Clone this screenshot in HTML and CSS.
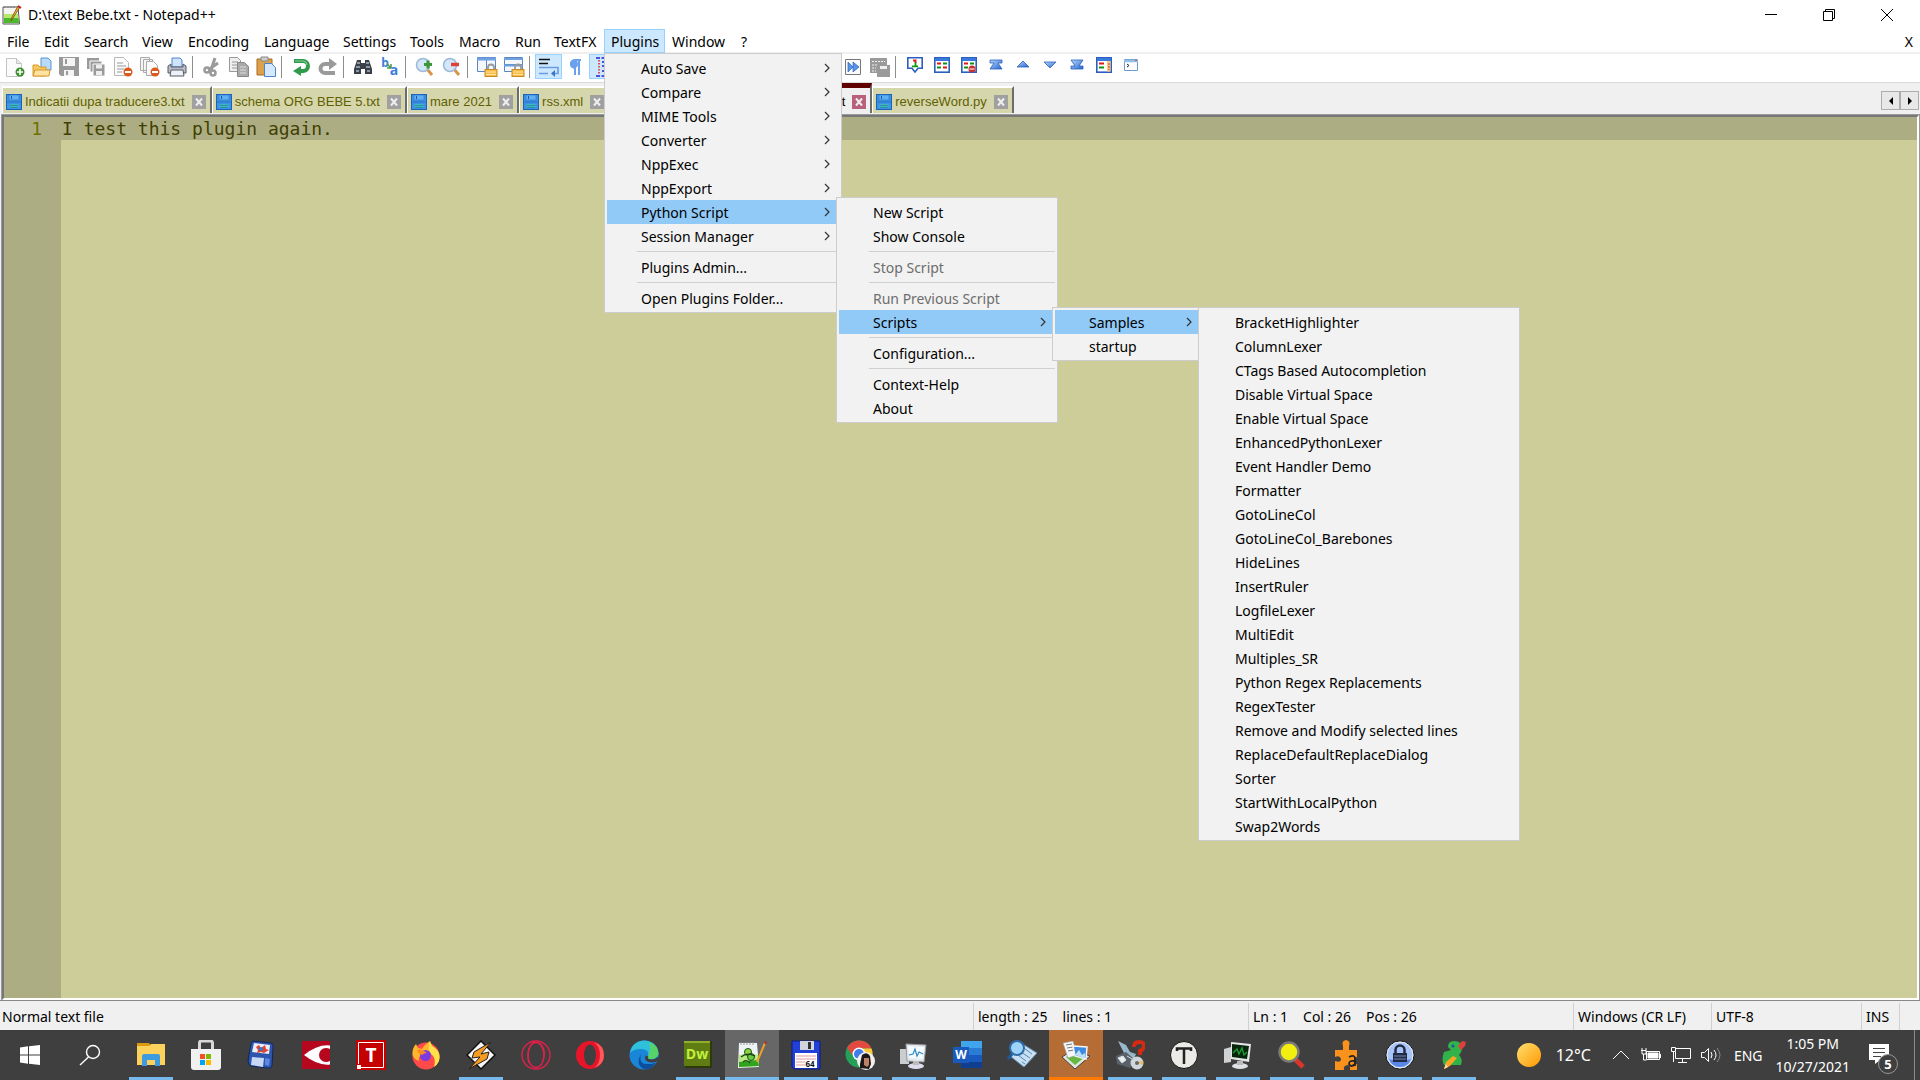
FILE: index.html
```html
<!DOCTYPE html>
<html lang="en">
<head>
    <meta charset="UTF-8">
    <meta name="viewport" content="width=device-width, initial-scale=1.0">
    <title>D:\text Bebe.txt - Notepad++</title>
    <link rel="stylesheet" href="styles.css">
</head>
<body>
    <!-- shared symbols -->
    <svg class="defs" aria-hidden="true">
        <symbol id="floppy" viewBox="0 0 16 16">
            <rect x=".5" y=".5" width="15" height="15" fill="#3c92e4" stroke="#1a63b8"/>
            <path d="M3 1h10v5H3z" fill="#5fb0f2" stroke="#2a74c6" stroke-width=".6"/>
            <path d="M5 2h1v3H5z" fill="#1a5ba8"/>
            <path d="M1 8h14" stroke="#2a74c6"/>
            <path d="M3.500 10h9v4h-9z" fill="#3fb5c0"/>
            <path d="M4 11.500h8M4 13.500h8" stroke="#1f7f9c" stroke-width=".7"/>
        </symbol>
        <symbol id="cross" viewBox="0 0 14 14">
            <path d="M4 3.500l6 7M10 3.500l-6 7" stroke="#eee" stroke-width="2"/>
        </symbol>
        <symbol id="arrow" viewBox="0 0 6 10">
            <path d="M1 1l4 4-4 4" fill="none" stroke="#333" stroke-width="1.200"/>
        </symbol>
        <symbol id="lock" viewBox="0 0 14 14">
            <path d="M4 7V4.500a3 3 0 0 1 6 0V7" fill="none" stroke="#999" stroke-width="1.800"/>
            <rect x="1" y="6.500" width="12" height="7" fill="#f6bd4a" stroke="#c98a20"/>
            <path d="M2 9h10M2 11.500h10" stroke="#fde09a"/>
        </symbol>
        <symbol id="grid-win" viewBox="0 0 16 16">
            <rect x=".8" y=".8" width="14.400" height="14.400" fill="#fff" stroke="#2a5fc0" stroke-width="1.600"/>
            <path d="M1 2.500h14" stroke="#3a78dc" stroke-width="3"/>
        </symbol>
        <linearGradient id="blueFade" x1="0" y1="0" x2="1" y2="1">
            <stop offset="0" stop-color="#b8d8fa"/><stop offset="1" stop-color="#2464d0"/>
        </linearGradient>
    </svg>

    <div class="window">
        <header class="titlebar">
            <svg class="app-icon" viewBox="0 0 20 20">
                <path d="M1 2h15l1.500 17H1z" fill="#f4f4f0" stroke="#555"/>
                <path d="M2 9h14l1 9H2z" fill="#b4ea6a"/><path d="M2 13h14.500l.5 5H2z" fill="#4cb82c"/>
                <path d="M3 1v2M6 1v2M9 1v2M12 1v2" stroke="#777"/>
                <path d="M18 2l-7 11-2 3 1-4 6-11z" fill="#f3ac2b" stroke="#7b4b12" stroke-width=".8"/>
                <path d="M16 1l3 2" stroke="#b22" stroke-width="2"/>
            </svg>
            <span class="title">D:\text Bebe.txt - Notepad++</span>
            <div class="win-buttons">
                <button aria-label="Minimize"><svg viewBox="0 0 12 12"><path d="M0 5.500h12"/></svg></button>
                <button aria-label="Restore"><svg viewBox="0 0 12 12"><path d="M.5 2.500h9v9h-9zM2.500 2.500v-2h9v9h-2"/></svg></button>
                <button aria-label="Close"><svg viewBox="0 0 12 12"><path d="M0 0l12 12M12 0L0 12"/></svg></button>
            </div>
        </header>

        <nav class="menubar">
            <button>File</button>
            <button>Edit</button>
            <button>Search</button>
            <button>View</button>
            <button>Encoding</button>
            <button>Language</button>
            <button>Settings</button>
            <button>Tools</button>
            <button>Macro</button>
            <button>Run</button>
            <button>TextFX</button>
            <div class="menu-holder">
                <button class="open">Plugins</button>
                <ul class="menu plugins-menu">
                    <li><button>Auto Save</button><svg class="arrow"><use href="#arrow"/></svg></li>
                    <li><button>Compare</button><svg class="arrow"><use href="#arrow"/></svg></li>
                    <li><button>MIME Tools</button><svg class="arrow"><use href="#arrow"/></svg></li>
                    <li><button>Converter</button><svg class="arrow"><use href="#arrow"/></svg></li>
                    <li><button>NppExec</button><svg class="arrow"><use href="#arrow"/></svg></li>
                    <li><button>NppExport</button><svg class="arrow"><use href="#arrow"/></svg></li>
                    <li class="selected"><button>Python Script</button><svg class="arrow"><use href="#arrow"/></svg>
                        <ul class="menu python-menu">
                            <li><button>New Script</button></li>
                            <li><button>Show Console</button></li>
                            <li class="line"></li>
                            <li><button disabled>Stop Script</button></li>
                            <li class="line"></li>
                            <li><button disabled>Run Previous Script</button></li>
                            <li class="selected"><button>Scripts</button><svg class="arrow"><use href="#arrow"/></svg>
                                <ul class="menu scripts-menu">
                                    <li class="selected"><button>Samples</button><svg class="arrow"><use href="#arrow"/></svg>
                                        <ul class="menu samples-menu">
                                            <li><button>BracketHighlighter</button></li>
                                            <li><button>ColumnLexer</button></li>
                                            <li><button>CTags Based Autocompletion</button></li>
                                            <li><button>Disable Virtual Space</button></li>
                                            <li><button>Enable Virtual Space</button></li>
                                            <li><button>EnhancedPythonLexer</button></li>
                                            <li><button>Event Handler Demo</button></li>
                                            <li><button>Formatter</button></li>
                                            <li><button>GotoLineCol</button></li>
                                            <li><button>GotoLineCol_Barebones</button></li>
                                            <li><button>HideLines</button></li>
                                            <li><button>InsertRuler</button></li>
                                            <li><button>LogfileLexer</button></li>
                                            <li><button>MultiEdit</button></li>
                                            <li><button>Multiples_SR</button></li>
                                            <li><button>Python Regex Replacements</button></li>
                                            <li><button>RegexTester</button></li>
                                            <li><button>Remove and Modify selected lines</button></li>
                                            <li><button>ReplaceDefaultReplaceDialog</button></li>
                                            <li><button>Sorter</button></li>
                                            <li><button>StartWithLocalPython</button></li>
                                            <li><button>Swap2Words</button></li>
                                        </ul>
                                    </li>
                                    <li><button>startup</button></li>
                                </ul>
                            </li>
                            <li class="line"></li>
                            <li><button>Configuration...</button></li>
                            <li class="line"></li>
                            <li><button>Context-Help</button></li>
                            <li><button>About</button></li>
                        </ul>
                    </li>
                    <li><button>Session Manager</button><svg class="arrow"><use href="#arrow"/></svg></li>
                    <li class="line"></li>
                    <li><button>Plugins Admin...</button></li>
                    <li class="line"></li>
                    <li><button>Open Plugins Folder...</button></li>
                </ul>
            </div>
            <button>Window</button>
            <button>?</button>
            <button class="close-doc">X</button>
        </nav>

        <div class="toolbar">
            <button aria-label="New"><svg viewBox="0 0 20 20"><path d="M1.500 1.500h10l5 5v13h-15z" fill="#fbfbfb" stroke="#c4c4c4"/><path d="M11.500 1.500v5h5" fill="#e8e8e8" stroke="#c4c4c4"/><circle cx="15" cy="15" r="4.500" fill="#3f8f2f"/><path d="M15 12v6M12 15h6" stroke="#fff" stroke-width="1.600"/></svg></button>
            <button aria-label="Open"><svg viewBox="0 0 20 20"><path d="M9 1h7l3 3v9H9z" fill="#b9daf8" stroke="#5b95d2"/><path d="M1 8h5l2 2h6v9H1z" fill="#f5c75c" stroke="#d79a2c"/><path d="M1 19l2-6h15l-1 6z" fill="#fde3a0" stroke="#d79a2c"/></svg></button>
            <button aria-label="Save"><svg viewBox="0 0 20 20"><path d="M0 0h20v19H2l-2-2z" fill="#9a9a9a"/><path d="M4 1h12v8H4zM5 13h10v6H5z" fill="#f4f4f4"/><path d="M6 2h2v5H6zM7 14h2v4H7z" fill="#9a9a9a"/></svg></button>
            <button aria-label="Save all"><svg viewBox="0 0 20 20"><path d="M1 1h12v11H1z" fill="#9a9a9a"/><path d="M4 4h12v11H4z" fill="#9a9a9a" stroke="#fff"/><path d="M7 7h12v12H7z" fill="#9a9a9a" stroke="#fff"/><path d="M10 7.500h6v4h-6zM10 14h6v4h-6z" fill="#eee"/></svg></button>
            <button aria-label="Close"><svg viewBox="0 0 20 20"><path d="M1.500 .5h9l5 5v13h-14z" fill="#fbfbfb" stroke="#b8b8b8"/><path d="M4 6h6M4 9h9M4 12h7M4 15h5" stroke="#999"/><circle cx="15" cy="15" r="4.500" fill="#dc5a20"/><path d="M12 15h6" stroke="#fff" stroke-width="2"/></svg></button>
            <button aria-label="Close all"><svg viewBox="0 0 20 20"><path d="M.5 .5h9v13h-9zM3.500 2.500h9v13h-9z" fill="#f5f5f5" stroke="#aaa"/><path d="M6.500 4.500h7l4 4v10h-11z" fill="#fbfbfb" stroke="#aaa"/><circle cx="15" cy="15" r="4.500" fill="#dc5a20"/><path d="M12 15h6" stroke="#fff" stroke-width="2"/></svg></button>
            <button aria-label="Print"><svg viewBox="0 0 20 20"><path d="M5 1h8l2 2v7H5z" fill="#cfe4fb" stroke="#4a86cc"/><path d="M1 9l3-2v3h12V7l3 2v7H1z" fill="#b9bdc6" stroke="#555b66"/><path d="M4 13h12l1 6H3z" fill="#eef1f6" stroke="#555b66"/></svg></button>
            <i class="sep"></i>
            <button aria-label="Cut"><svg viewBox="0 0 20 20"><path d="M13 1l-4 12M16 6L6 13" stroke="#9a9a9a" stroke-width="3"/><circle cx="5" cy="13" r="2.500" fill="none" stroke="#9a9a9a" stroke-width="2.500"/><circle cx="11" cy="16" r="2.500" fill="none" stroke="#9a9a9a" stroke-width="2.500"/></svg></button>
            <button aria-label="Copy"><svg viewBox="0 0 20 20"><path d="M.5 .5h8l3 3v11H.5z" fill="#eee" stroke="#999"/><path d="M3 5h6M3 8h6M3 11h6" stroke="#999"/><path d="M8.500 5.500h7l4 4v10h-11z" fill="#aaa" stroke="#888"/><path d="M11 10h6M11 13h6M11 16h6" stroke="#ddd"/></svg></button>
            <button aria-label="Paste"><svg viewBox="0 0 20 20"><path d="M1 2h15v16H1z" fill="#dda04c" stroke="#a86a1c"/><path d="M5 0h7v4H5z" fill="#ccc" stroke="#888"/><path d="M8.500 6.500h7l4 4v9h-11z" fill="#d6e8fc" stroke="#4a86d0"/></svg></button>
            <i class="sep"></i>
            <button aria-label="Undo"><svg viewBox="0 0 20 20"><path d="M3 4h9a5 5 0 0 1 0 10H9" fill="none" stroke="#2f9a4a" stroke-width="4"/><path d="M10 9v10l-8-5z" fill="#2f9a4a"/><path d="M4 4h8a4 4 0 0 1 4 4" fill="none" stroke="#8ad29a"/></svg></button>
            <button aria-label="Redo"><svg viewBox="0 0 20 20"><path d="M17 16H7a4 4 0 0 1 0-9h6" fill="none" stroke="#9a9a9a" stroke-width="4"/><path d="M11 1v12l8-6z" fill="#9a9a9a"/></svg></button>
            <i class="sep"></i>
            <button aria-label="Find"><svg viewBox="0 0 20 20"><path d="M4 3h4v3h4V3h4l3 9v5h-7v-5H8v5H1v-5z" fill="#3a4049"/><path d="M4 6h3M13 6h3M3 10h4M13 10h4M3 14h3M14 14h3" stroke="#a9b4c2" stroke-width="1.500"/></svg></button>
            <button aria-label="Replace"><svg viewBox="0 0 20 20"><text x="5" y="10" class="glyph" font-size="12" fill="#3c7ddc">b</text><path d="M7 7l4 4M11 7v4H7" stroke="#4a9a4a" stroke-width="1.500" fill="none"/><text x="14" y="18" class="glyph" font-size="14" fill="#3c7ddc">a</text></svg></button>
            <i class="sep"></i>
            <button aria-label="Zoom in"><svg viewBox="0 0 20 20"><path d="M12 12l5 6" stroke="#d9954a" stroke-width="3"/><circle cx="8" cy="8" r="6.500" fill="#d3e7fb" stroke="#9db8d6" stroke-width="1.500"/><path d="M13 3.500v8M9 7.500h8" stroke="#3e9636" stroke-width="3"/></svg></button>
            <button aria-label="Zoom out"><svg viewBox="0 0 20 20"><path d="M12 12l5 6" stroke="#d9954a" stroke-width="3"/><circle cx="8" cy="8" r="6.500" fill="#d3e7fb" stroke="#9db8d6" stroke-width="1.500"/><path d="M9 7.500h8" stroke="#e0403a" stroke-width="3.500"/></svg></button>
            <i class="sep"></i>
            <button aria-label="Sync vertical scrolling"><svg viewBox="0 0 20 20"><path d="M.5 .5h9v14h-9zM9.500 .5h9v14h-9z" fill="#f4f8fd" stroke="#5a86c4"/><path d="M0 2h19" stroke="#6fa0e0" stroke-width="3"/><use href="#lock" x="7" y="6" width="14" height="14"/></svg></button>
            <button aria-label="Sync horizontal scrolling"><svg viewBox="0 0 20 20"><path d="M.5 .5h18v7H.5zM.5 7.500h18v7H.5z" fill="#f4f8fd" stroke="#5a86c4"/><path d="M0 2h19M0 8.500h19" stroke="#6fa0e0" stroke-width="2"/><use href="#lock" x="7" y="6" width="14" height="14"/></svg></button>
            <i class="sep"></i>
            <button class="on" aria-label="Word wrap"><svg viewBox="0 0 20 20"><path d="M0 2.500h11M0 6.500h9" stroke="#111" stroke-width="1.600"/><path d="M0 10.500h19v6h-5M0 16.500h9" fill="none" stroke="#6d9be0" stroke-width="1.600"/><path d="M16 13v7l-4-3.500z" fill="#3f74cc"/></svg></button>
            <button aria-label="Show all characters"><svg viewBox="0 0 20 20"><path d="M15 3H9a4 4 0 0 0 0 8M9 3v15M13 3v15" fill="none" stroke="#6ba0ec" stroke-width="2"/><circle cx="8" cy="7" r="4" fill="#6ba0ec"/></svg></button>
            <button class="on" aria-label="Indent guide"><svg viewBox="0 0 20 20"><path d="M3 1h17M3 19h17M9 5h11M9 9h11M9 14h11" stroke="#22c" stroke-width="1.500" stroke-dasharray="4 1.500"/><path d="M6 3v14" stroke="#d22" stroke-width="1.500" stroke-dasharray="1.500 1.500"/></svg></button>
            <button class="run-macro" aria-label="Run macro multiple times"><svg viewBox="0 0 20 20"><path d="M2.500 2.500h15v15h-15z" fill="#fbfbfb" stroke="#777"/><path d="M5 5l5 5-5 5zM10 5l6 5-6 5z" fill="#5a94e8" stroke="#2c62b8" stroke-width=".7"/></svg></button>
            <button aria-label="Save macro"><svg viewBox="0 0 20 20"><path d="M0 1h17v15H0zM7 8h13v12H7z" fill="#9a9a9a"/><path d="M2 4.500h13M2 8h5M2 11h4M2 14h4" stroke="#f2f2f2" stroke-dasharray="2 1"/><path d="M10 9h7v3h-7z" fill="#eee"/></svg></button>
            <i class="sep"></i>
            <button class="small" aria-label="First difference"><svg viewBox="0 0 16 16"><path d="M.8 .8h14.400v10.500H11L8 15l-3-3.700H.8z" fill="#fff" stroke="#2a5fc0" stroke-width="1.600"/><path d="M6 3.500h2.500V6" fill="none" stroke="#d22" stroke-width="2"/><path d="M8.500 5.500V9M5 9.300h6" stroke="#191" stroke-width="1.800"/></svg></button>
            <button class="small" aria-label="Compare"><svg viewBox="0 0 16 16"><use href="#grid-win" width="16" height="16"/><path d="M3 6.500h4M9 10.500h4" stroke="#e01818" stroke-width="2"/><path d="M9 6.500h4M3 10.500h4" stroke="#109010" stroke-width="2"/></svg></button>
            <button class="small" aria-label="Clear results"><svg viewBox="0 0 16 16"><use href="#grid-win" width="16" height="16"/><path d="M3 6.500h4" stroke="#e01818" stroke-width="2"/><path d="M9 6.500h4M3 10.500h4" stroke="#109010" stroke-width="2"/><circle cx="11" cy="12" r="3.500" fill="#c82f2f"/><path d="M8.500 12h5" stroke="#fbb" stroke-width="1.500"/></svg></button>
            <button class="small" aria-label="First"><svg viewBox="0 0 16 16"><path d="M2 3h12v3h-4l4 6H2l4-6H2z" fill="url(#blueFade)" stroke="#2b61be" stroke-width=".8"/></svg></button>
            <button class="small" aria-label="Previous"><svg viewBox="0 0 16 16"><path d="M8 4l6 6H2z" fill="url(#blueFade)" stroke="#2b61be" stroke-width=".8"/></svg></button>
            <button class="small" aria-label="Next"><svg viewBox="0 0 16 16"><path d="M8 11l6-6H2z" fill="url(#blueFade)" stroke="#2b61be" stroke-width=".8"/></svg></button>
            <button class="small" aria-label="Last"><svg viewBox="0 0 16 16"><path d="M2 3h12l-4 6h4v3H2V9h4z" fill="url(#blueFade)" stroke="#2b61be" stroke-width=".8"/></svg></button>
            <button class="small" aria-label="Navigation bar"><svg viewBox="0 0 16 16"><use href="#grid-win" width="16" height="16"/><path d="M11 4h3.500v10.500H11z" fill="#f9c878"/><path d="M3 6.500h5" stroke="#e01818" stroke-width="2"/><path d="M3 10.500h5" stroke="#109010" stroke-width="2"/><path d="M13 6v7" stroke="#c33" stroke-dasharray="2 1"/></svg></button>
            <button class="small" aria-label="Console"><svg viewBox="0 0 16 16"><path d="M1.500 2.500h13v11h-13z" fill="#fff" stroke="#6f9cc8"/><path d="M1 4h14" stroke="#8fc0ec" stroke-width="2.500"/><path d="M12 3.500h2" stroke="#e84a30"/><path d="M4 7l2 1.500L4 10" fill="none" stroke="#222"/></svg></button>
        </div>

        <div class="tabbar">
            <div class="tab"><svg class="disk"><use href="#floppy"/></svg><span>Indicatii dupa traducere3.txt</span><button aria-label="Close tab"><svg><use href="#cross"/></svg></button></div>
            <div class="tab"><svg class="disk"><use href="#floppy"/></svg><span>schema ORG BEBE 5.txt</span><button aria-label="Close tab"><svg><use href="#cross"/></svg></button></div>
            <div class="tab"><svg class="disk"><use href="#floppy"/></svg><span>mare 2021</span><button aria-label="Close tab"><svg><use href="#cross"/></svg></button></div>
            <div class="tab"><svg class="disk"><use href="#floppy"/></svg><span>rss.xml</span><button aria-label="Close tab"><svg><use href="#cross"/></svg></button></div>
            <div class="tab active"><span>text Bebe.txt</span><button aria-label="Close tab"><svg><use href="#cross"/></svg></button></div>
            <div class="tab"><svg class="disk"><use href="#floppy"/></svg><span>reverseWord.py</span><button aria-label="Close tab"><svg><use href="#cross"/></svg></button></div>
            <div class="tab-scroll">
                <button aria-label="Scroll left"><svg viewBox="0 0 4 8"><path d="M4 0v8L0 4z"/></svg></button>
                <button aria-label="Scroll right"><svg viewBox="0 0 4 8"><path d="M0 0v8l4-4z"/></svg></button>
            </div>
        </div>

        <main class="editor">
            <div class="gutter">1</div>
            <textarea aria-label="Document" spellcheck="false">I test this plugin again.</textarea>
        </main>

        <footer class="statusbar">
            <span>Normal text file</span>
            <span class="wide-gap"><span>length : 25</span><span>lines : 1</span></span>
            <span class="wide-gap"><span>Ln : 1</span><span>Col : 26</span><span>Pos : 26</span></span>
            <span>Windows (CR LF)</span>
            <span>UTF-8</span>
            <span>INS</span>
            <span></span>
        </footer>
    </div>

    <div class="taskbar">
        <div class="group start">
            <button aria-label="Start"><svg viewBox="0 0 30 30"><path d="M5 7.500l8-1.200v8.200H5zM14 6.200L25 5v9.500H14zM5 15.500h8v8.200l-8-1.200zM14 15.500h11V25l-11-1.200z" fill="#fff"/></svg></button>
            <button aria-label="Search"><svg viewBox="0 0 30 30"><circle cx="18" cy="12" r="6.500" fill="none" stroke="#fff" stroke-width="1.400"/><path d="M13.500 17L5 25" stroke="#fff" stroke-width="1.400"/></svg></button>
        </div>
        <div class="group pinned">
            <button class="running" aria-label="File Explorer"><svg viewBox="0 0 30 30"><path d="M1 3h12l2 3H1z" fill="#dc9a10"/><path d="M1 6h12l2-2h14v21H1z" fill="#fdd25c"/><path d="M6 26V16q0-2 2-2h14q2 0 2 2v10h-5v-6h-8v6z" fill="#3f9be0"/></svg></button>
            <button aria-label="Store"><svg viewBox="0 0 30 30"><path d="M8.500 9V3q0-2 2-2h9q2 0 2 2v6" fill="none" stroke="#d8d8d8" stroke-width="3"/><path d="M0 9h30v18q0 3-3 3H3q-3 0-3-3z" fill="#f1f1f1"/><path d="M9 14h5v5H9z" fill="#f25022"/><path d="M15 14h5v5h-5z" fill="#7fba00"/><path d="M9 20h5v5H9z" fill="#00a4ef"/><path d="M15 20h5v5h-5z" fill="#ffb900"/></svg></button>
            <button aria-label="Disk tool"><svg viewBox="0 0 30 30"><path d="M7 1l18 2q3 1 2 4l-1 19q-1 3-5 2L5 26q-3-1-3-5L5 3z" fill="#2c55b0" stroke="#13265a"/><path d="M8 3l16 2-1 9L6 12z" fill="#e9eef8"/><path d="M10 7l3-2 2 3 4-3 1 4 3 1-5 3-3-1-4 1 1-3z" fill="#e0442c"/><circle cx="15" cy="9" r="2" fill="#3078d8"/><path d="M6 17l12 1-1 9-12-2z" fill="#c8d8f4"/><path d="M19 18l5 1-1 7-4-1z" fill="#5b87de"/></svg></button>
            <button aria-label="CCleaner"><svg viewBox="0 0 30 30"><path d="M1 1h28v28H1z" fill="#b5081f"/><path d="M29 5.500Q17 4 3 15q14 11 26 9.500v-3.500q-2 1-4 1a7 7 0 0 1 0-14q2 0 4 1z" fill="#fff"/></svg></button>
            <button aria-label="Total"><svg viewBox="0 0 30 30"><path d="M0 0h30v30H0z" fill="#c40000"/><path d="M5 27.500h22.500V2.500h-25V24" fill="none" stroke="#fff"/><path d="M1 25h4v4H1z" fill="#fff"/><text x="15" y="22" class="glyph" font-size="19" fill="#fff">T</text></svg></button>
            <button aria-label="Firefox"><svg viewBox="0 0 30 30"><circle cx="15" cy="16" r="13.500" fill="#ff4a4a"/><path d="M1.500 15Q1 8 5 4l2 4 4 1q2-4 8-8 1 5 5 7 5 4 4.500 10-1 6-5 8 2-10-4-14-6-2-9 3-4 2-2 6-5-1-7-6z" fill="#ffb52e"/><path d="M19 1q1 5 5 7 6 5 4 13-2 4-5 6 3-9-3-13-4-5-1-13z" fill="#ffe14a"/><circle cx="14.500" cy="15.500" r="5.500" fill="#7a3be0"/><path d="M6 10q4-1 7 1l3 2q-3 0-5 2-4-1-5-5z" fill="#ff8a1c"/></svg></button>
            <button class="running" aria-label="Winamp"><svg viewBox="0 0 30 30"><path d="M15 1l14 14-14 14L1 15z" fill="#f6f6f6" stroke="#111" stroke-width="1.500"/><path d="M25 2L8 12l-2 6 8-1-11 12 18-10 2-7-8 2z" fill="#f59a23" stroke="#222"/></svg></button>
            <button aria-label="Opera GX"><svg viewBox="0 0 30 30" fill="none" stroke="#e0204a" stroke-width="1.400"><circle cx="15" cy="15" r="14"/><ellipse cx="15" cy="15" rx="8" ry="12.500"/><path d="M14 1Q4 9 8 23M17 3q9 4 5 18"/></svg></button>
        </div>
        <div class="group apps">
            <button aria-label="Opera"><svg viewBox="0 0 30 30"><circle cx="15" cy="15" r="14" fill="#e8152a"/><path d="M19 2q10 3 10 13T19 28q6-4 6-13T19 2z" fill="#ff5a5a"/><ellipse cx="15" cy="15" rx="6" ry="10.500" fill="#3f3f3f"/></svg></button>
            <button aria-label="Edge"><svg viewBox="0 0 30 30"><circle cx="15" cy="15" r="14.500" fill="#1a86d8"/><path d="M1 13Q3 1 16 .5 29 2 29.500 14q-2 6-9 5-3-1-1-4 0-6-7-6Q4 9 1 13z" fill="#2fc0dc"/><path d="M20 2q9 3 9.500 12-2 6-9 5-3-1-1-4 3-6 .5-13z" fill="#56d46a"/><path d="M12 14q-3 11 8 10 5 0 7-2-4 8-12 7Q6 25 12 14z" fill="#0c4f9c"/><path d="M18 16q-2 5 5 5 4 0 6-3" fill="none" stroke="#3f3f3f" stroke-width="3"/></svg></button>
            <button class="running" aria-label="Dreamweaver"><svg viewBox="0 0 30 30"><path d="M2 1h27v27H2z" fill="#2e3a08"/><path d="M1 1h26v25H1z" fill="#5f7d12"/><path d="M1 1h26v2H1z" fill="#8fb028"/><text x="14" y="19" class="glyph" font-size="14" fill="#c4f03c">Dw</text></svg></button>
            <button class="running current" aria-label="Notepad++"><svg viewBox="0 0 30 30"><path d="M2 3h18l2 24-21 1z" fill="#eef3f3"/><path d="M2 15q10-3 19 0l1 11-20 1z" fill="#b8ec80"/><path d="M2 22l19-2 1 6-20 1z" fill="#2fa41c"/><path d="M4 2v3M7 2v3M10 2v3M13 2v3M16 2v3" stroke="#999"/><circle cx="11" cy="12" r="3.500" fill="#8fd83a" stroke="#1b5020"/><circle cx="14" cy="17" r="3.500" fill="#6cc840" stroke="#1b5020"/><path d="M4 17q6-5 14-1M6 22q4-3 7 1" fill="none" stroke="#1b4020" stroke-width="1.200"/><path d="M28 3l-8 19" stroke="#eda028" stroke-width="2"/><path d="M28.500 1v3" stroke="#a33" stroke-width="2"/></svg></button>
            <button class="running" aria-label="Floppy 64"><svg viewBox="0 0 30 30"><path d="M1 1h28v28H3l-2-2z" fill="#2040d8" stroke="#0c1c80"/><path d="M9 1h14v9H9z" fill="#d0d4dc"/><path d="M17 2h3v7h-3z" fill="#333"/><path d="M4 13h22v15H4z" fill="#fff"/><path d="M5 16h20M5 19h20M5 22h9M5 25h9" stroke="#e49aa0"/><text x="19" y="27" class="glyph" font-size="8" fill="#111">64</text></svg></button>
            <button class="running" aria-label="Chrome"><svg viewBox="0 0 30 30"><circle cx="14" cy="14" r="13.500" fill="#24a058"/><path d="M2 8Q6 .5 14 .5q9 0 12.500 8H14l-6 7z" fill="#e24a40"/><path d="M14 8.500h12.500Q29 14 26 21l-10 6 4-10z" fill="#fcc934"/><circle cx="14" cy="14" r="6.500" fill="#fff"/><circle cx="14" cy="14" r="5" fill="#3f7ee8"/><circle cx="21" cy="21" r="9" fill="#f3efef"/><path d="M15 28v-4l2-9q5-4 8 1l1 8-2 5z" fill="#1d1818"/><path d="M19 18h5v7l-2 2-3-2z" fill="#bd8268"/></svg></button>
            <button class="running" aria-label="System monitor"><svg viewBox="0 0 30 30"><path d="M1 9h9v15H1z" fill="#c9cdd0"/><path d="M7 4l20 1-2 17-17-1z" fill="#e4e8ec" stroke="#999"/><path d="M9 6l16 1-1 12-14-1z" fill="#f4fbff"/><path d="M10 15l4-1 2-5 2 7 2-4 4 2" fill="none" stroke="#2f86c0" stroke-width="1.200"/><ellipse cx="17" cy="26" rx="8" ry="3" fill="#dde"/><path d="M14 21h6v4h-6z" fill="#bbb"/></svg></button>
            <button class="running" aria-label="Word"><svg viewBox="0 0 30 30"><path d="M8 1h21v7H8z" fill="#41a5ee"/><path d="M8 8h21v7H8z" fill="#2b7cd3"/><path d="M8 15h21v7H8z" fill="#185abd"/><path d="M8 22h21v6H8z" fill="#103f91"/><path d="M0 7h16v16H0z" fill="#185abd"/><text x="8" y="19" class="glyph" font-size="12" fill="#fff">W</text></svg></button>
            <button class="running" aria-label="Viewer"><svg viewBox="0 0 30 30"><path d="M14 3l16 10-13 14L3 16z" fill="#c6dff2" stroke="#6d92b4"/><path d="M17 8l8 6M14 12l9 6M11 15l8 6M15 22l3 2" stroke="#5a86b0"/><circle cx="10" cy="8" r="7" fill="#9fd4fa" stroke="#2e6ca8" stroke-width="2"/><path d="M5 14l-4 5" stroke="#1d5a98" stroke-width="3"/></svg></button>
            <button class="running alert" aria-label="Picture tool"><svg viewBox="0 0 30 30"><path d="M1 17l11-7 17 6-15 13z" fill="#e0e5dd" stroke="#444"/><path d="M5 17l8-5 12 4-11 9z" fill="#65b840"/><path d="M2 3l10-2 4 14-9 3z" fill="#f6f6f6" stroke="#999" stroke-width=".6"/><path d="M5 5l6-1M6 8l6-1M7 11l6-1" stroke="#777"/><path d="M12 6l14 1-1 12-11-3z" fill="#3c8be0" stroke="#f4f4f4" stroke-width="1.500"/><path d="M14 15l4-5 3 5 3-2v5z" fill="#bfe0f8"/></svg></button>
            <button class="running" aria-label="Utility"><svg viewBox="0 0 30 30"><path d="M3 1l8 4 4 7 6 2-3 7-9-8z" fill="#9ab8cc"/><path d="M1 16l10-4 9 8-5 8-13-4z" fill="#59616a"/><path d="M3 18l5-2 3 4-4 3zM12 16l5 3" fill="#e8eef2" stroke="#ddd"/><circle cx="22" cy="23" r="6.500" fill="#cfd6dc"/><path d="M22 23l6-3v5z" fill="#e0c070"/><circle cx="22" cy="23" r="2" fill="#666"/><path d="M19 7q0-5 5-5 6 0 5 5-1 3-4 4v4" fill="none" stroke="#d42a12" stroke-width="4"/></svg></button>
            <button class="running" aria-label="Typora"><svg viewBox="0 0 30 30"><circle cx="15" cy="15" r="13.500" fill="#eceae6" stroke="#111"/><path d="M8 11V8.500h14V11M15 8v16" fill="none" stroke="#222" stroke-width="2.500"/></svg></button>
            <button class="running" aria-label="Terminal monitor"><svg viewBox="0 0 30 30"><path d="M1 9l7-2v15l-7 1z" fill="#d0d2d4"/><path d="M8 2l20 2-2 18-18-3z" fill="#e4e6e8"/><path d="M9 4l17 2-2 13-15-2z" fill="#07260c"/><path d="M10 13l4-4 2 5 3-6 2 7 3-3" fill="none" stroke="#1f9c34" stroke-width="1.400"/><ellipse cx="17" cy="26" rx="8" ry="3" fill="#dfe1e4"/><path d="M14 21h6v4h-6z" fill="#bbb"/></svg></button>
            <button class="running" aria-label="Search everything"><svg viewBox="0 0 30 30"><path d="M17 18l9 9" stroke="#d8362a" stroke-width="5"/><circle cx="12" cy="12" r="9.500" fill="#f2ee10" stroke="#7a7a78" stroke-width="2.500"/></svg></button>
            <button class="running" aria-label="Puzzle"><svg viewBox="0 0 30 30"><path d="M4 10h8V6q-2-5 3-6 5 1 3 6v4h8v7q-3 0-3 4t3 3v6h-7q1-5-3-5-4 1-3 5H4v-9q6 2 6-2-1-4-6-2z" fill="#f8921c"/><path d="M18 17q6-3 6 2v7M24 21q-6-1-6 3 2 4 6 0" fill="none" stroke="#222" stroke-width="1.800"/></svg></button>
            <button class="running" aria-label="KeePass"><svg viewBox="0 0 30 30"><circle cx="15" cy="15" r="14" fill="#a8c4f8" stroke="#111"/><circle cx="15" cy="15" r="13" fill="none" stroke="#eee"/><path d="M4 19q11 4 22 0-3 8-11 8T4 19z" fill="#5a86e8"/><path d="M10.500 14v-4a4.500 4.500 0 0 1 9 0v4" fill="none" stroke="#222b44" stroke-width="2.500"/><path d="M8 13h14v9H8z" fill="#222b44"/><path d="M9 16h12M9 19h12" stroke="#8aa4dc" stroke-width=".8"/></svg></button>
            <button class="running" aria-label="Parrot"><svg viewBox="0 0 30 30"><path d="M9 7q0-6 6-6 8 0 8 7 0 4-3 7 4 4 2 10H5Q2 20 5 12l7-2z" fill="#30b44a"/><circle cx="14" cy="6" r="1.500" fill="#1c50a0"/><path d="M19 6l4-5 4 1-1 4-4 4z" fill="#e0403c"/><path d="M5 29l2-7 7-6 4 2-7 8z" fill="#f5a623"/><path d="M5 29l2-5 2 3z" fill="#f6ddb0"/></svg></button>
        </div>
        <div class="tray">
            <svg class="sun" viewBox="0 0 24 24"><defs><linearGradient id="sun" x1="0" y1="0" x2="1" y2="1"><stop offset="0" stop-color="#ffe070"/><stop offset="1" stop-color="#ff9800"/></linearGradient></defs><circle cx="12" cy="12" r="12" fill="url(#sun)"/></svg>
            <span class="temp">12°C</span>
            <svg class="chevron" viewBox="0 0 16 16"><path d="M0 12l8-8 8 8"/></svg>
            <svg class="tray-icon" viewBox="0 0 20 16"><path d="M5.500 4.500h13v8h-13zM19.500 7v4M2.500 7v6h3M0 3.500h5M1 1v6h4V1"/><path d="M7 6h10v5H7z" fill="#fff"/></svg>
            <svg class="tray-icon" viewBox="0 0 20 16"><path d="M5 1.500h14.500v10H4.500V5M11.500 12v3M7 15.500h9M.5 .5h4v4h-4zM2.500 5v10"/></svg>
            <svg class="tray-icon" viewBox="0 0 20 16"><path d="M.5 5.500h3l4-4v13l-4-4h-3zM10 5q2 3 0 6M13 3q4 5 0 10"/><path d="M16 1q6 7 0 14" stroke="#888"/></svg>
            <span class="lang">ENG</span>
            <div class="clock"><span>1:05 PM</span><span>10/27/2021</span></div>
            <button class="notify" aria-label="Notifications"><svg viewBox="0 0 30 30"><path d="M0 0h20v16h-9l-5 4v-4H0z" fill="#fff"/><path d="M4 4.500h12M4 8.500h12M4 12.500h8" stroke="#444"/></svg><b>5</b></button>
        </div>
    </div>
</body>
</html>
```
FILE: styles.css
```css
* {
    box-sizing: border-box;
}
body {
    margin: 0;
    height: 100vh;
    display: flex;
    flex-direction: column;
    overflow: hidden;
    background-color: #f0f0f0;
    color: #000;
    font-family: "Noto Sans", "Open Sans", sans-serif;
    font-size: 14px;
}
button {
    margin: 0;
    padding: 0;
    border: none;
    background: none;
    color: inherit;
    font: inherit;
}
svg {
    display: block;
}
.defs {
    position: absolute;
    width: 0;
    height: 0;
}
.window {
    flex: 1;
    min-height: 0;
    display: flex;
    flex-direction: column;
}

/* title bar */
.titlebar {
    display: flex;
    align-items: center;
    height: 29px;
    padding-left: 2px;
    background-color: #fff;
}
.app-icon {
    width: 20px;
    height: 20px;
    margin-right: 6px;
}
.win-buttons {
    display: flex;
    margin-left: auto;
    padding-right: 4px;
}
.win-buttons button {
    display: flex;
    justify-content: center;
    width: 58px;
}
.win-buttons svg {
    width: 12px;
    height: 12px;
    overflow: visible;
    fill: none;
    stroke: #000;
}

/* menu bar */
.menubar {
    display: grid;
    grid-template-columns: 37px 40px 58px 46px 76px 79px 67px 49px 56px 39px 57px 61px 69px 22px 1fr;
    height: 25px;
    background-color: #fff;
    border-bottom: 2px solid #f0f0f0;
}
.menubar > button, .menu-holder > button {
    height: 24px;
    padding: 0 6px;
    border: 1px solid transparent;
    line-height: 24px;
    text-align: left;
    white-space: nowrap;
}
.menu-holder {
    position: relative;
}
.menubar .open {
    width: 100%;
    background-color: #cce8ff;
    border-color: #99d1ff;
}
.menubar .close-doc {
    justify-self: end;
}
.menu {
    position: absolute;
    z-index: 10;
    margin: 0;
    padding: 2px;
    border: 1px solid #ccc;
    background-color: #f2f2f2;
    list-style: none;
}
.menu li {
    position: relative;
    display: flex;
    align-items: center;
    height: 24px;
}
.menu li > button {
    flex: 1;
    padding: 1px 0 0 34px;
    line-height: 23px;
    text-align: left;
    white-space: nowrap;
}
.menu button:disabled {
    color: #6d6d6d;
}
.menu .selected {
    background-color: #91c9f7;
}
.menu .line {
    height: 7px;
    margin-left: 30px;
}
.menu .line::before {
    content: "";
    flex: 1;
    height: 1px;
    background-color: #d0d0d0;
}
.arrow {
    width: 6px;
    height: 10px;
    margin-right: 9px;
}
.menu .menu {
    top: -3px;
    left: calc(100% - 3px);
}
.plugins-menu {
    top: 24px;
    left: 0;
    width: 238px;
}
.python-menu {
    width: 222px;
}
.scripts-menu {
    width: 152px;
}
.samples-menu {
    width: 322px;
}

/* toolbar */
.toolbar {
    display: flex;
    height: 29px;
    padding-left: 1px;
    background-color: #fff;
    border-bottom: 1px solid #dadada;
}
.toolbar button {
    display: flex;
    align-items: center;
    justify-content: center;
    width: 27px;
    height: 25px;
    border: 1px solid transparent;
}
.toolbar .on {
    background-color: #cce8ff;
    border-color: #99d1ff;
}
.toolbar svg {
    width: 20px;
    height: 20px;
    overflow: visible;
}
.toolbar .small {
    height: 21px;
}
.toolbar .small svg {
    width: 16px;
    height: 16px;
}
.toolbar .run-macro {
    margin-left: 223px;
}
.sep {
    width: 1px;
    height: 22px;
    margin: 2px 5px 0 2px;
    background-color: #8d8d8d;
}

/* tabs */
.tabbar {
    display: flex;
    align-items: flex-end;
    height: 32px;
    padding: 0 1px 1px 2px;
    border-bottom: 1px solid #fff;
}
.tab {
    display: flex;
    align-items: center;
    height: 27px;
    padding: 2px 4px 0 3px;
    border-top: 2px solid #fff;
    border-left: 1px solid #fff;
    border-right: 2px solid #6d6d6d;
    background-color: #d6d6ac;
    color: #606000;
    font-family: "Liberation Sans", Arial, sans-serif;
    font-size: 13px;
}
.tab .disk {
    width: 16px;
    height: 16px;
    margin-right: 3px;
}
.tab button {
    width: 14px;
    height: 14px;
    margin-left: 7px;
    background-color: #a0a0a0;
}
.tab button svg {
    width: 14px;
    height: 14px;
}
.tab.active {
    justify-content: flex-end;
    width: 262px;
    height: 30px;
    border-top: 5px solid #600000;
    background-color: #f0f0f0;
    color: #000;
}
.tab.active button {
    background-color: #b8607c;
}
.tab-scroll {
    display: flex;
    margin-left: auto;
    padding-bottom: 3px;
}
.tab-scroll button {
    display: flex;
    align-items: center;
    justify-content: center;
    width: 19px;
    height: 19px;
    border: 1px solid #adadad;
    background-color: #e8e8e8;
}
.tab-scroll svg {
    width: 4px;
    height: 8px;
}

/* editor */
.editor {
    flex: 1;
    display: flex;
    min-height: 0;
    margin: 0 1px 0 2px;
    border: 2px solid #777;
    border-right: 2px solid #fff;
    border-bottom: 2px solid #fff;
    outline: 1px solid #999;
    outline-offset: 0;
    font-family: "DejaVu Sans Mono", Consolas, monospace;
    font-size: 18px;
    line-height: 23px;
}
.gutter {
    width: 57px;
    padding-right: 19px;
    background-color: #adad84;
    color: #707000;
    text-align: right;
}
.editor textarea {
    flex: 1;
    padding: 0 1px;
    border: none;
    outline: none;
    resize: none;
    background: linear-gradient(#adad84 23px, #cdcd9a 23px);
    color: #404000;
    font: inherit;
}

/* status bar */
.statusbar {
    display: grid;
    grid-template-columns: 1fr 275px 325px 138px 150px 38px 21px;
    height: 30px;
    padding-top: 2px;
    border-top: 1px solid #888;
    line-height: 27px;
}
.statusbar > span {
    padding-left: 4px;
    border-left: 1px solid #d0d0d0;
    white-space: nowrap;
}
.statusbar > span:first-child {
    padding-left: 2px;
    border-left: none;
}
.wide-gap {
    display: flex;
    gap: 15px;
}

/* taskbar */
.taskbar {
    display: flex;
    height: 50px;
    background-color: #3f3f3f;
    color: #fff;
}
.group {
    display: flex;
}
.group button {
    display: flex;
    align-items: center;
    justify-content: center;
    width: 54px;
    height: 50px;
}
.group svg {
    width: 30px;
    height: 30px;
}
.glyph {
    font-family: "Open Sans", sans-serif;
    font-weight: bold;
    text-anchor: middle;
}
.start button {
    width: 60px;
}
.pinned {
    padding-left: 3px;
}
.pinned button {
    width: 55px;
}
.group .running {
    background: linear-gradient(#76b9ed, #76b9ed) center bottom / 44px 3px no-repeat;
}
.group .current {
    background-size: 54px 3px;
    background-color: #676767;
}
.group .alert {
    background: #b56c35;
    border-bottom: 3px solid #ff7a00;
    padding-top: 3px;
}
.tray {
    flex: 1;
    display: flex;
    align-items: center;
    justify-content: flex-end;
    padding-right: 5px;
}
.sun {
    width: 24px;
    height: 24px;
    margin-right: 15px;
}
.temp {
    margin-right: 22px;
    font-size: 16px;
}
.chevron {
    width: 16px;
    height: 16px;
    margin-right: 12px;
    fill: none;
    stroke: #fff;
}
.tray-icon {
    width: 20px;
    height: 16px;
    margin-right: 10px;
    overflow: visible;
    fill: none;
    stroke: #fff;
}
.lang {
    margin: 0 13px 0 3px;
}
.clock {
    display: flex;
    flex-direction: column;
    align-items: center;
    line-height: 23px;
}
.notify {
    position: relative;
    width: 46px;
    height: 50px;
    margin-left: 19px;
    border-right: 1px solid #8a8a8a;
}
.notify svg {
    width: 30px;
    height: 30px;
    margin-top: 8px;
}
.notify b {
    position: absolute;
    top: 24px;
    left: 9px;
    width: 20px;
    height: 20px;
    border: 1px solid #999;
    border-radius: 50%;
    background-color: #3f3f3f;
    font-size: 13px;
    line-height: 18px;
    text-align: center;
}
```
